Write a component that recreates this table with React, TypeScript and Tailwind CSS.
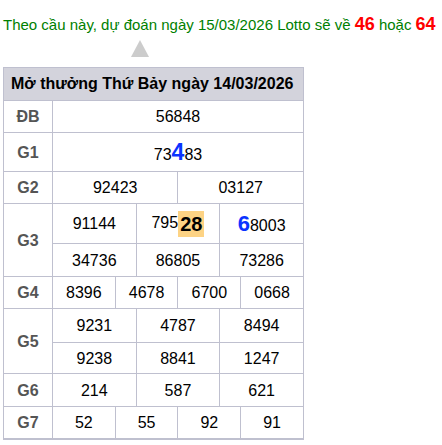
import React from "react";

const cell = "border border-[#bfc0cf] text-center py-0 leading-[19px] text-[16px] text-black";
const label = "border border-[#bfc0cf] text-center py-0 leading-[19px] text-[16px] font-bold text-[#555]";

function Row({ values, span }: { values: string[]; span: number }) {
  return (
    <>
      {values.map((v, i) => (
        <td key={i} colSpan={span} className={cell}>
          {v}
        </td>
      ))}
    </>
  );
}

export default function App() {
  return (
    <div className="w-[442px] h-[445px] bg-white overflow-hidden font-['Liberation_Sans',Arial,sans-serif]">
      <p className="pl-[3px] pt-[13px] whitespace-nowrap text-[15px] leading-[22px] text-[#008000]">
        Theo cầu này, dự đoán ngày 15/03/2026 Lotto sẽ về{" "}
        <span className="text-[18px] font-bold text-[#ff0000]">46</span> hoặc{" "}
        <span className="text-[18px] font-bold text-[#ff0000]">64</span>
      </p>
      <div className="ml-[131px] mt-[4px] w-0 h-0 border-l-[9px] border-r-[9px] border-b-[17px] border-l-transparent border-r-transparent border-b-[#cccccc]" />
      <table className="ml-[3px] mt-[10px] w-[301px] table-fixed border-collapse border-b-2 border-[#bfc0cf]">
        <colgroup>
          <col className="w-[49px]" />
          {Array.from({ length: 12 }).map((_, i) => (
            <col key={i} />
          ))}
        </colgroup>
        <tbody>
          <tr className="h-[33px]">
            <td colSpan={13} className="border border-[#bfc0cf] bg-[#d3d3dc] text-left pl-[7px] leading-[20px] text-[16px] font-bold text-black">
              Mở thưởng Thứ Bảy ngày 14/03/2026
            </td>
          </tr>
          <tr className="h-[32px]">
            <td className={label}>ĐB</td>
            <Row values={["56848"]} span={12} />
          </tr>
          <tr className="h-[39px]">
            <td className={label}>G1</td>
            <td colSpan={12} className={cell}>
              73<span className="text-[23px] font-bold text-[#0a33ff] leading-[24px]">4</span>83
            </td>
          </tr>
          <tr className="h-[32px]">
            <td className={label}>G2</td>
            <Row values={["92423", "03127"]} span={6} />
          </tr>
          <tr className="h-[40px]">
            <td rowSpan={2} className={label}>G3</td>
            <td colSpan={4} className={cell}>91144</td>
            <td colSpan={4} className={cell}>
              795
              <span className="inline-block bg-[#fdd384] px-[2px] text-[20px] font-bold leading-[26px] align-middle">28</span>
            </td>
            <td colSpan={4} className={cell}>
              <span className="text-[22px] font-bold text-[#0a33ff] leading-[24px]">6</span>8003
            </td>
          </tr>
          <tr className="h-[33px]">
            <Row values={["34736", "86805", "73286"]} span={4} />
          </tr>
          <tr className="h-[32px]">
            <td className={label}>G4</td>
            <Row values={["8396", "4678", "6700", "0668"]} span={3} />
          </tr>
          <tr className="h-[34px]">
            <td rowSpan={2} className={label}>G5</td>
            <Row values={["9231", "4787", "8494"]} span={4} />
          </tr>
          <tr className="h-[31px]">
            <Row values={["9238", "8841", "1247"]} span={4} />
          </tr>
          <tr className="h-[33px]">
            <td className={label}>G6</td>
            <Row values={["214", "587", "621"]} span={4} />
          </tr>
          <tr className="h-[32px]">
            <td className={label}>G7</td>
            <Row values={["52", "55", "92", "91"]} span={3} />
          </tr>
        </tbody>
      </table>
    </div>
  );
}
